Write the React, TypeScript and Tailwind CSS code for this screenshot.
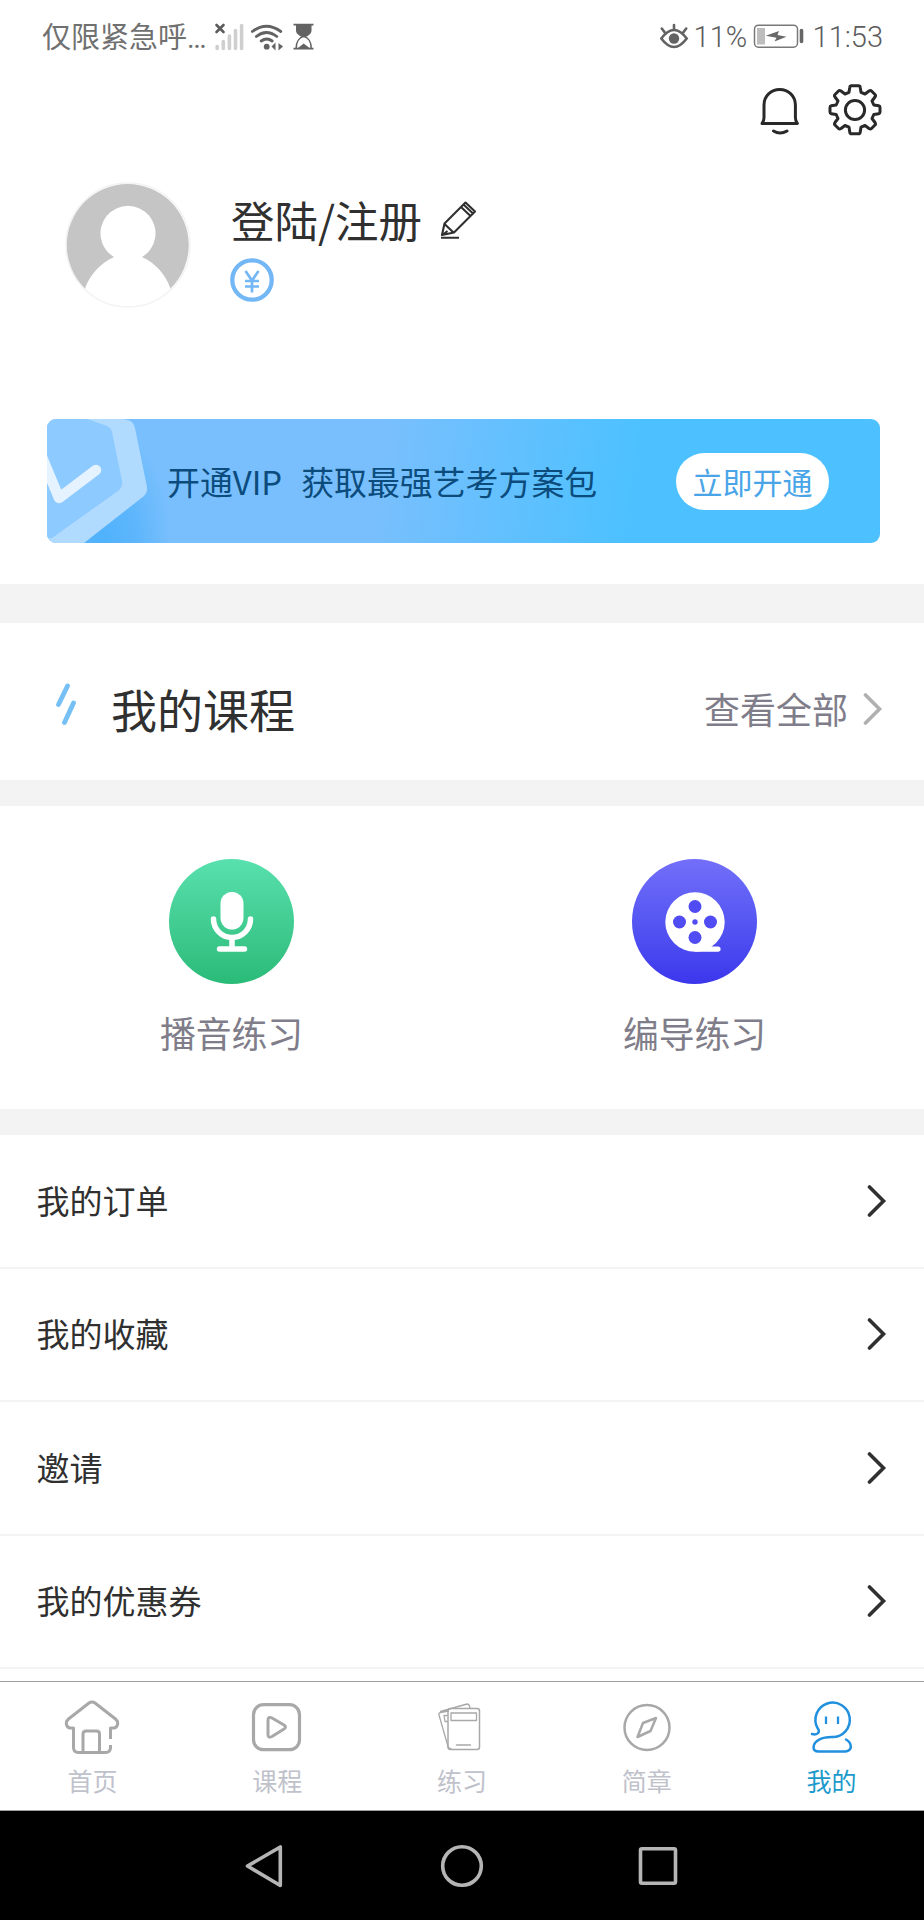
import type { ReactNode } from 'react'

const ROWS = ['我的订单', '我的收藏', '邀请', '我的优惠券']

function StatusBar() {
  return (
    <div className="flex h-[74px] items-center justify-between pl-[42px] pr-[41px] text-[29px] leading-none text-[#707070]">
      <div className="flex items-center">
        <span className="w-[162px] whitespace-nowrap">仅限紧急呼<span className="font-['Roboto'] tracking-[-1.500px]">...</span></span>
        <svg className="ml-[10px]" width="30" height="30" viewBox="214 21 30 30" fill="none">
          <path d="M216.500 24L223.500 31M223.500 24L216.500 31" stroke="#5c5c5c" strokeWidth="2.600" strokeLinecap="round" />
          <path d="M217.200 45.500v2M223.300 40.500v7M229.400 35v12.500M235.500 29.500v18M241.600 24.500v23" stroke="#cfcfcf" strokeWidth="3.600" strokeLinecap="round" />
        </svg>
        <svg className="ml-[6px]" width="34" height="30" viewBox="250 21 34 30" fill="none" stroke="#636363" strokeWidth="2.800" strokeLinecap="round">
          <path d="M252.300 30.500q14-10.500 28.500 0M256.300 35.500q10-8 20.500 0M261.200 40q5.500-4 11 0" />
          <circle cx="266.700" cy="45.700" r="2.900" fill="#636363" stroke="none" />
          <path d="M271.500 45.500l4-4v8zM278.500 42v7.500l4.500-4z" fill="#636363" stroke="none" />
        </svg>
        <svg className="ml-[9px]" width="22" height="28" viewBox="293 23 22 28" fill="none" stroke="#636363" strokeWidth="1.600">
          <path d="M293.500 24.700h20M293.500 48.700h20" strokeWidth="1.800" />
          <path d="M296 24.500h15.500v6c0 3-3 5.500-7.700 7c-4.800-1.500-7.800-4-7.800-7z" fill="#636363" stroke="none" />
          <path d="M303.700 36c-5 2-7.500 5-7.500 12.500M303.700 36c5 2 7.500 5 7.500 12.500" />
          <path d="M298 48l5.700-4.500l5.800 4.500z" fill="#636363" stroke="none" />
        </svg>
      </div>
      <div className="flex items-center font-['Roboto'] font-light text-[#5c5c5c]">
        <svg width="30" height="28" viewBox="660 23 30 28" fill="none" stroke="#636363" strokeWidth="2.600" strokeLinecap="round">
          <path d="M661.300 38.500q12.700-17 25.400 0q-12.700 17-25.400 0z" />
          <circle cx="674" cy="38.500" r="5.200" fill="#636363" stroke="none" />
          <path d="M674 25v4.500M661.800 28.500l3 4M686.200 28.500l-3 4" />
        </svg>
        <span className="ml-[4px] w-[54px]">11%</span>
        <svg className="ml-[5px]" width="52" height="26" viewBox="754 24 52 26" fill="none">
          <rect x="755.500" y="25.200" width="43" height="22" rx="4" stroke="#787878" strokeWidth="1.500" />
          <rect x="758" y="28" width="8" height="16.500" fill="#bdbdbd" />
          <path d="M766.700 35.800L780 31L778.500 35L787.500 36.700L775.500 41.500L777.500 37.700z" fill="#686868" />
          <path d="M802.500 30.500v11" stroke="#666" strokeWidth="3.600" strokeLinecap="round" />
        </svg>
        <span className="ml-[8px]">11:53</span>
      </div>
    </div>
  )
}

function HeaderIcons() {
  return (
    <div className="flex h-[76px] items-center justify-end pb-[5px] pr-[42px]">
      <svg width="42" height="50" viewBox="759 84 42 50" fill="none" stroke="#292929" strokeWidth="3" strokeLinecap="round" strokeLinejoin="round">
        <path d="M762 122.500c1.800-2 2-3.500 2-6v-12.500c0-9 7-15.500 15.700-15.500s15.700 6.500 15.700 15.500v12.500c0 2.500 .2 4 2 6z" />
        <path d="M773.500 130q6.500 4 13.500 0" />
      </svg>
      <svg className="ml-[27px]" width="54" height="54" viewBox="-27 -27 54 54" fill="none" stroke="#292929" strokeWidth="3" strokeLinejoin="round">
        <path d="M-3.500-24.200h7q1.500 0 1.700 1.500l.8 5l4 1.700l4-3q1.500-1 2.500 0l3.500 3.500q1 1 0 2.500l-3 4l1.800 4l5 .8q1.200 .2 1.200 1.700v4.500q0 1.500-1.200 1.700l-5 .8l-1.800 4l3 4q1 1.500 0 2.500l-3.500 3.500q-1 1-2.500 0l-4-3l-4 1.700l-.8 5q-.2 1.500-1.700 1.500h-7q-1.500 0-1.700-1.500l-.8-5l-4-1.700l-4 3q-1.500 1-2.500 0l-3.500-3.500q-1-1 0-2.500l3-4l-1.800-4l-5-.8q-1.200-.2-1.200-1.700v-4.500q0-1.500 1.200-1.700l5-.8l1.800-4l-3-4q-1-1.500 0-2.500l3.500-3.500q1-1 2.500 0l4 3l4-1.700l.8-5q.2-1.500 1.700-1.500z" />
        <circle r="9.600" />
      </svg>
    </div>
  )
}

function Profile() {
  return (
    <div className="flex h-[269px] pl-[65px] pt-[30px]">
      <svg width="126" height="130" viewBox="65 180 126 130">
        <circle cx="128" cy="245" r="62" fill="#fff" stroke="#f3f3f3" strokeWidth="1.500" />
        <path d="M85 288.500a61 61 0 1 1 85.500 0c-5-14-15-25.500-28.500-31.500a27.500 27.500 0 1 0-28 0c-13.500 6-24 17.500-29 31.500z" fill="#c5c5c5" />
      </svg>
      <div className="ml-[40px] pt-[16px]">
        <div className="flex h-[48px] items-center">
          <span className="text-[43.500px] leading-none text-[#303030]">登陆/注册</span>
          <svg className="ml-[18px]" width="38" height="40" viewBox="440 199 38 40" fill="none" stroke="#303030" strokeWidth="2.100" strokeLinejoin="round">
            <path d="M442 234l2.500-11.500l21-21l9.500 9l-21 21zM444.500 223l9 8.500M461 206l9.500 9M463.500 203.500l9.500 9M441 236.700h18M442.500 234l5-4" />
          </svg>
        </div>
        <svg className="-ml-px mt-[14px]" width="44" height="44" viewBox="-22 -22 44 44" fill="none" stroke="#74b7f5">
          <circle r="19.700" strokeWidth="4.300" />
          <path d="M-6.500-9L0 .5l6.500-9.500M0 .5V12.500M-7 1h14M-7 6.500h14" strokeWidth="2.700" />
        </svg>
      </div>
    </div>
  )
}

function VipBanner() {
  return (
    <div className="h-[165px] pl-[47px] pr-[44px]">
      <div className="flex h-[124px] items-center overflow-hidden rounded-[9px] bg-[radial-gradient(ellipse_70px_120px_at_55px_124px,#4fb2fc_0%,#5eb6fc_50%,transparent_100%),linear-gradient(98deg,#79bffd_0%,#79bffd_40%,#4dc1ff_70%,#4dc1ff_100%)]">
        <svg className="shrink-0" width="120" height="124" viewBox="0 0 120 124" fill="none">
          <path d="M0 0h76q11 1 12 9l12 59q1 5-3 9L37 124H0z" fill="#b1daff" />
          <path d="M0 0h40l20 7q4 2 5 6l10 49q1 6-4 10L5 119H0z" fill="#8dcaff" />
          <path d="M-8 31L12 79L49 51" stroke="#e5f2ff" strokeWidth="10.500" strokeLinecap="round" strokeLinejoin="round" />
        </svg>
        <span className="whitespace-pre text-[32.900px] leading-none text-[#0c4c7d]">开通VIP<span className="inline-block w-[19px]" />获取最强艺考方案包</span>
        <button type="button" className="ml-auto mr-[51px] h-[57px] w-[153px] rounded-full bg-white pb-[1px] text-[30px] leading-none text-[#49a5e8]">立即开通</button>
      </div>
    </div>
  )
}

function Chevron({ className }: { className: string }) {
  return (
    <svg className={className} width="20" height="34" viewBox="0 0 20 34" fill="none" stroke="currentColor" strokeWidth="3.600" strokeLinecap="round">
      <path d="M2.500 3L16.500 17L2.500 31" />
    </svg>
  )
}

function Gap({ className }: { className: string }) {
  return <div className={`bg-[#f3f3f3] ${className}`} />
}

function Courses() {
  return (
    <div className="flex h-[157px] items-center pl-[54px] pr-[41px]">
      <svg width="24" height="44" viewBox="54 682 24 44" fill="none" stroke="#77c0f5" strokeWidth="4.800" strokeLinecap="round" className="mt-[5px]">
        <path d="M67.500 686L58.500 704.500M73.500 703L64.500 722.500" />
      </svg>
      <span className="ml-[33px] pt-[12px] text-[46px] leading-none text-[#303030]">我的课程</span>
      <span className="ml-auto pt-[12px] text-[36px] leading-none text-[#7f7d89]">查看全部</span>
      <Chevron className="ml-[15px] mt-[14px] text-[#b0b0b0]" />
    </div>
  )
}

function Practice() {
  return (
    <div className="flex h-[303px] pt-[53px]">
      <div className="flex flex-1 flex-col items-center pl-[2px]">
        <div className="flex h-[125px] w-[125px] items-center justify-center rounded-full bg-linear-to-b from-[#58e0ae] to-[#2abb78]">
          <svg width="60" height="70" viewBox="-30 -35 60 70" fill="none" stroke="#fff" strokeLinecap="round">
            <rect x="-11.500" y="-30" width="23" height="37.500" rx="11.500" fill="#fff" stroke="none" />
            <path d="M-18.500-3a18.500 18.500 0 0 0 37 0M0 16v10M-12.500 27h25" strokeWidth="5.500" />
          </svg>
        </div>
        <span className="mt-[31px] text-[35.800px] leading-none text-[#7f7d89]">播音练习</span>
      </div>
      <div className="flex flex-1 flex-col items-center pl-[4px]">
        <div className="flex h-[125px] w-[125px] items-center justify-center rounded-full bg-linear-to-b from-[#736ff9] to-[#3c36ec]">
          <svg width="62" height="62" viewBox="-31 -31 62 62" fill="#fff">
            <circle r="29.700" />
            <path d="M0 24.500h23a2.600 2.600 0 0 1 0 5.200H0z" />
            <g fill="#504bf2">
              <circle cy="-15.500" r="6.500" />
              <circle cy="15.500" r="6.500" />
              <circle cx="-15.500" r="6.500" />
              <circle cx="15.500" r="6.500" />
              <circle r="2.700" />
            </g>
          </svg>
        </div>
        <span className="mt-[31px] text-[35.800px] leading-none text-[#7f7d89]">编导练习</span>
      </div>
    </div>
  )
}

function Tab({ label, active, children }: { label: string; active?: boolean; children: ReactNode }) {
  return (
    <div className="flex flex-1 flex-col items-center pt-[17px]">
      <svg width="60" height="60" viewBox="-30 -30 60 60" fill="none" stroke={active ? '#2090df' : '#a8a8a8'} strokeLinecap="round" strokeLinejoin="round">
        {children}
      </svg>
      <span className={`mt-[9px] text-[25px] leading-none ${active ? 'text-[#1c9acb]' : 'text-[#bfc2cb]'}`}>{label}</span>
    </div>
  )
}

function TabBar() {
  return (
    <div className="flex h-[130px] border-b border-t border-[#a0a0a0] bg-white">
      <Tab label="首页">
        <path d="M18.500 10v-11h4q4-1.500 3-6.500l-2-2.500L3-26q-3-2-6 0l-20.500 16l-2 2.500q-1 5 3 6.500h4V18.500q0 5 5 5H13.500q5 0 5-5v-2.500M-9 22.500V5q0-3 3-3H4.500q3 0 3 3V22.500" strokeWidth="3" strokeLinecap="butt" />
      </Tab>
      <Tab label="课程">
        <rect x="-23.500" y="-24.300" width="46" height="45" rx="10" strokeWidth="3.200" />
        <path d="M-9-8.500q0-4.500 4-2.500L7-4q3 2 0 4L-5 7.500q-4 2-4-2z" strokeWidth="3" />
      </Tab>
      <Tab label="练习">
        <path d="M-13.500-18l-8 1.500q-2 .5-1.500 2.500L-14 17.500q.5 2 3 2.200M-21.500-17.500L5-25q2 0 2.500 2l.5 2M-15-13.500h-3l1 6h2.500" strokeWidth="1.300" />
        <rect x="-14" y="-20.500" width="31.500" height="41" rx="2.500" strokeWidth="1.500" />
        <rect x="-11" y="-16" width="25.500" height="7.500" strokeWidth="1.300" />
        <path d="M-5.500 16h14" strokeWidth="1.300" />
      </Tab>
      <Tab label="简章">
        <circle cy="-1.500" r="22.500" strokeWidth="2.500" />
        <path d="M9-11L3.500 2L-9.500 8L-4-6z" strokeWidth="2.500" />
      </Tab>
      <Tab label="我的" active>
        <path d="M-20 5c6 1.500 8.500-2 5.500-6a17.200 17.200 0 1 1 14.500 9C-10 8-18 11.500-18.500 18q0 4.500 5 4.500H13.500c7-1 7-8 .5-12" strokeWidth="2.500" />
        <path d="M-6-12.500v7.500M6-12.500v7.500" strokeWidth="2.300" strokeLinecap="butt" />
      </Tab>
    </div>
  )
}

function SystemNav() {
  return (
    <div className="flex h-[109px] items-center justify-center bg-black pr-[3px]">
      <svg width="42" height="46" viewBox="243 1842 42 46" fill="none" stroke="#b5b5b5" strokeWidth="3.600" strokeLinejoin="round">
        <path d="M247.500 1865L280.300 1846V1884.500z" />
      </svg>
      <svg className="ml-[154px]" width="46" height="46" viewBox="-23 -23 46 46" fill="none" stroke="#b5b5b5" strokeWidth="3.600">
        <circle r="19.300" />
      </svg>
      <svg className="ml-[152px]" width="42" height="42" viewBox="-21 -21 42 42" fill="none" stroke="#b5b5b5" strokeWidth="3.600">
        <rect x="-17.500" y="-17.300" width="35" height="34.600" rx="1.500" />
      </svg>
    </div>
  )
}

export default function App() {
  return (
    <div className="flex h-[1920px] w-[924px] flex-col overflow-hidden bg-white font-['Noto_Sans_CJK_SC',sans-serif]">
      <StatusBar />
      <HeaderIcons />
      <Profile />
      <VipBanner />
      <Gap className="h-[39px]" />
      <Courses />
      <Gap className="h-[26px]" />
      <Practice />
      <Gap className="h-[26px]" />
      <div className="flex h-[546px] flex-col overflow-hidden">
        {ROWS.map((label) => (
          <div key={label} className="flex h-[133.500px] shrink-0 items-center justify-between border-b-2 border-[#f3f3f3] pl-[36.500px] pr-[37px]">
            <span className="pb-[1px] text-[33px] leading-none text-[#303030]">{label}</span>
            <Chevron className="text-[#303030]" />
          </div>
        ))}
      </div>
      <TabBar />
      <SystemNav />
    </div>
  )
}
